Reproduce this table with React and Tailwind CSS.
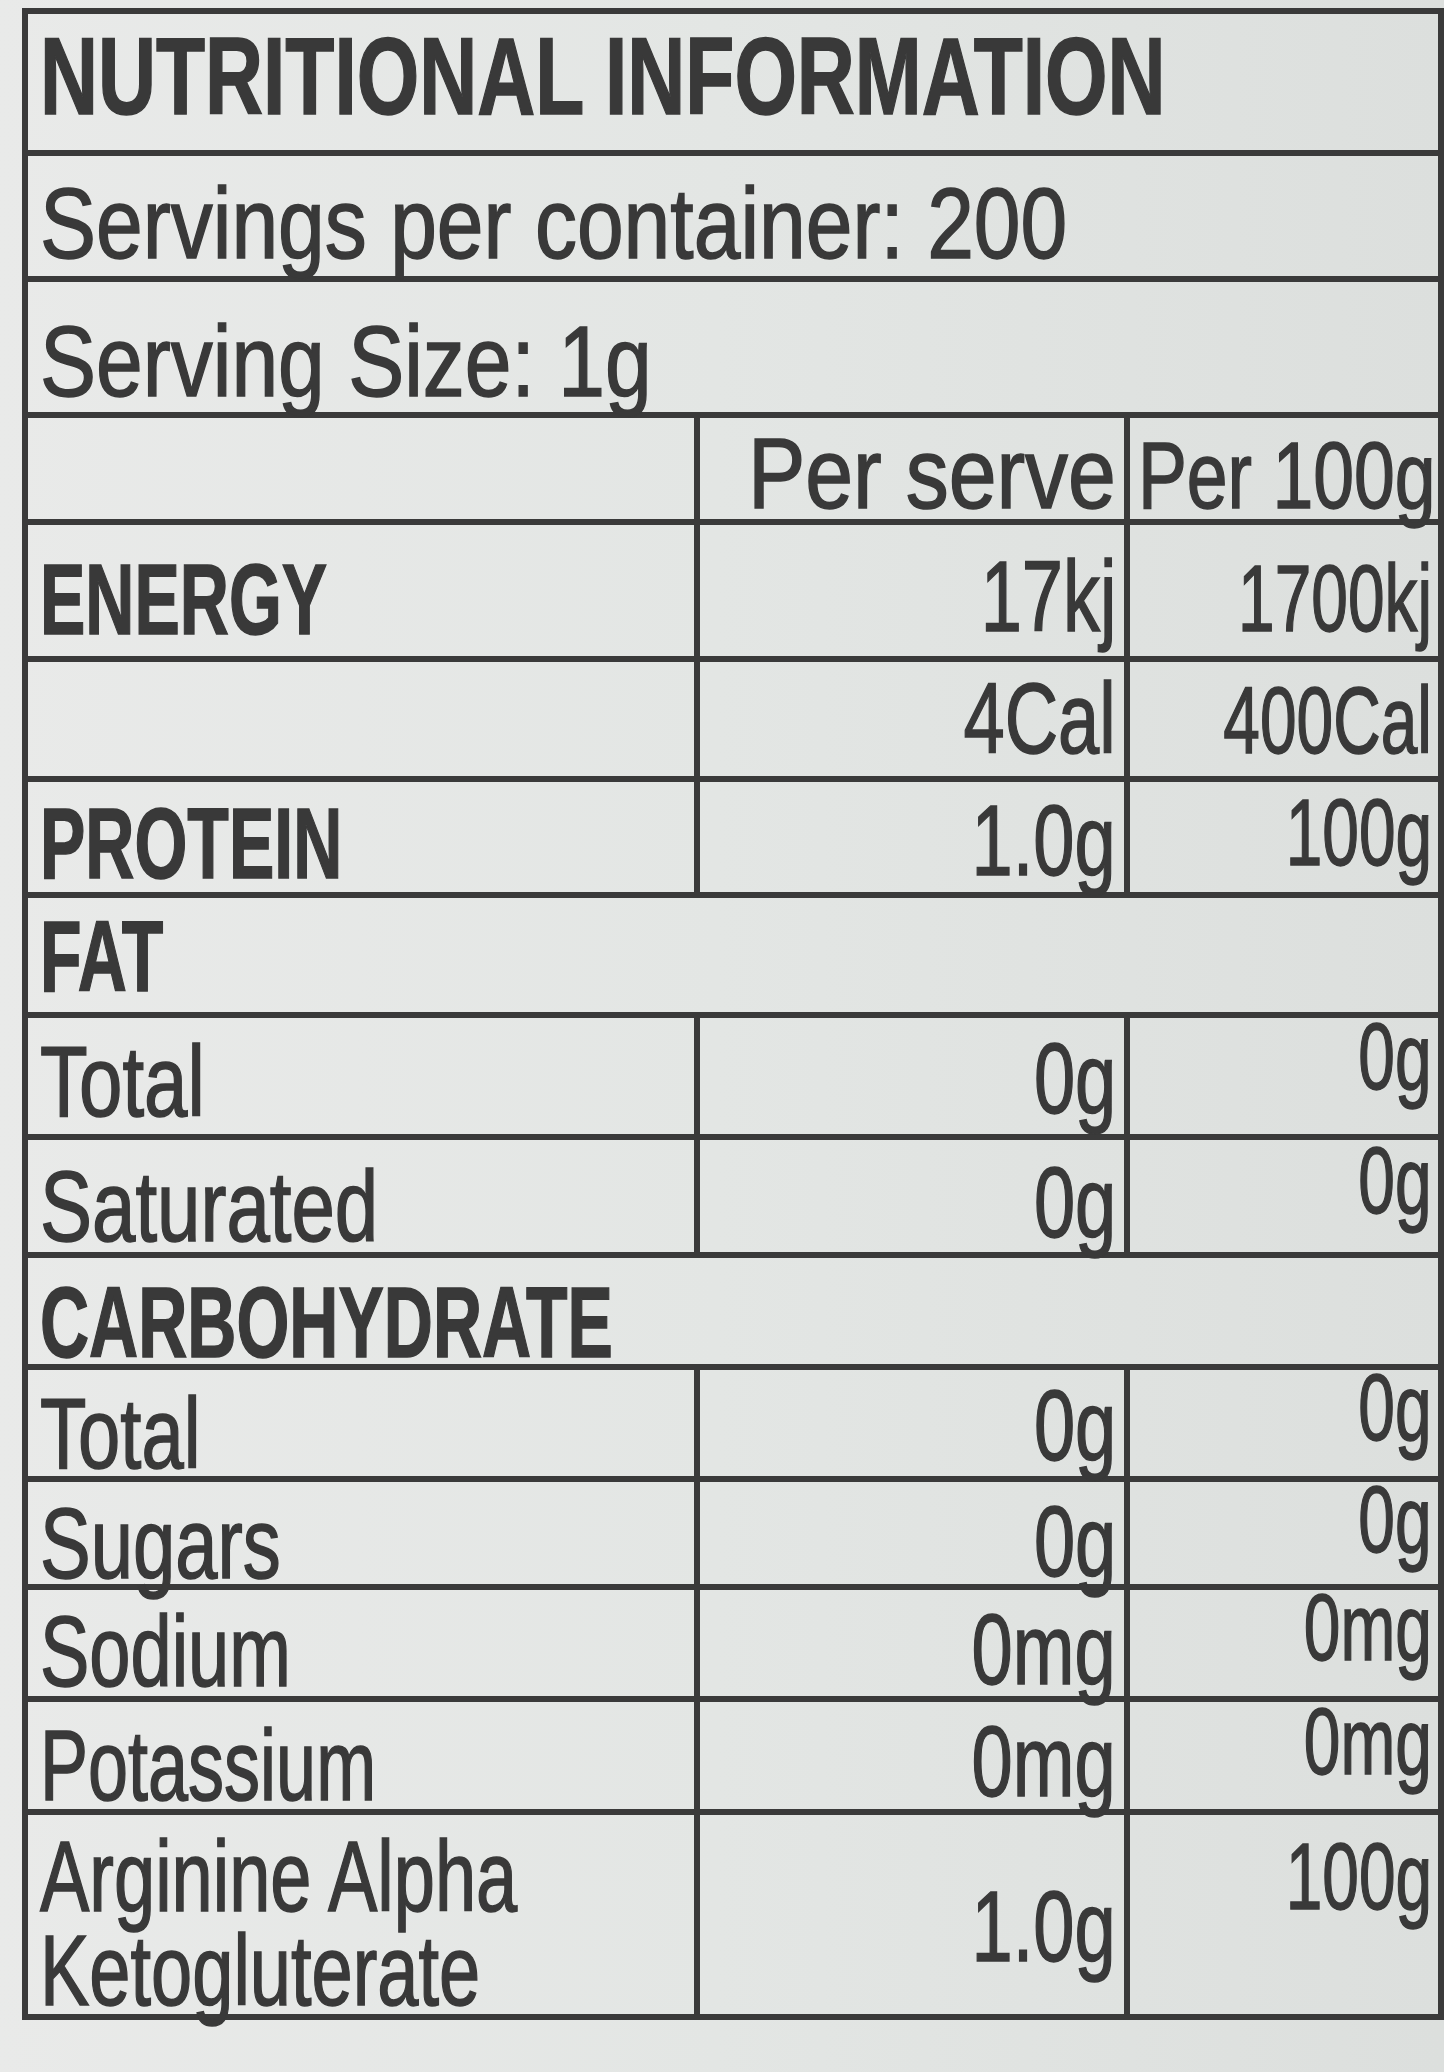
import React from 'react';

const font = { fontFamily: '"Liberation Sans", Arial, sans-serif' };

// condensed text: the label face is a narrow grotesque, so squeeze a regular face
function T({ children, s = 'scale-x-[0.8]', right }) {
  return (
    <span className={`inline-block whitespace-nowrap ${right ? 'origin-right' : 'origin-left'} ${s}`}>
      {children}
    </span>
  );
}

// single full-width row
function WideRow({ h, children, pb }) {
  return (
    <div className={`flex items-end px-[12px] ${pb} ${h} border-b-[6px] border-[#3a3a3a]`}>
      {children}
    </div>
  );
}

// three column row
function Row({ h, label, a, b, pb, pa, pbb, last }) {
  return (
    <div className={`grid grid-cols-[672px_430px_minmax(0,1fr)] ${h} ${last ? '' : 'border-b-[6px]'} border-[#3a3a3a]`}>
      <div className={`flex items-end px-[12px] ${pb} border-r-[6px] border-[#3a3a3a]`}>{label}</div>
      <div className={`flex items-end justify-end pr-[8px] ${pa || pb} border-r-[6px] border-[#3a3a3a]`}>
        <T right s="scale-x-[0.74]">{a}</T>
      </div>
      <div className={`flex items-end justify-end pr-[6px] text-[94px] ${pbb || pa || pb}`}>
        <T right s="scale-x-[0.7]">{b}</T>
      </div>
    </div>
  );
}

const Bold = ({ children }) => (
  <span className="font-bold">
    <T s="scale-x-[0.68]">{children}</T>
  </span>
);

export default function App() {
  return (
    <div
      className="w-[1444px] h-[2072px] overflow-hidden bg-gradient-to-r from-[#e9eae9] via-[#e3e6e4] to-[#dcdfdd] text-[#393939] [-webkit-text-stroke:1.5px_#393939] pt-[8px] pl-[22px]"
      style={font}
    >
      <div className="w-[1422px] border-[6px] border-[#3a3a3a] text-[100px] leading-[0.8]">
        <WideRow h="h-[142px]" pb="pb-[30px]">
          <span className="font-bold text-[110px]">
            <T s="scale-x-[0.73]">NUTRITIONAL INFORMATION</T>
          </span>
        </WideRow>
        <WideRow h="h-[126px]" pb="pb-[13px]">
          <T s="scale-x-[0.84]">Servings per container: 200</T>
        </WideRow>
        <WideRow h="h-[136px]" pb="pb-[11px]">
          <T s="scale-x-[0.84]">Serving Size: 1g</T>
        </WideRow>
        <div className="grid grid-cols-[672px_430px_minmax(0,1fr)] h-[107px] border-b-[6px] border-[#3a3a3a]">
          <div className="border-r-[6px] border-[#3a3a3a]" />
          <div className="flex items-end justify-end pr-[8px] pb-[6px] border-r-[6px] border-[#3a3a3a]">
            <T right s="scale-x-[0.86]">Per serve</T>
          </div>
          <div className="flex items-end justify-end pr-[2px] pb-[6px] text-[94px]">
            <T right s="scale-x-[0.78]">Per 100g</T>
          </div>
        </div>
        <Row h="h-[137px]" label={<Bold>ENERGY</Bold>} a="17kj" b="1700kj" pb="pb-[17px]" pa="pb-[20px]" />
        <Row h="h-[120px]" label="" a="4Cal" b="400Cal" pb="pb-[18px]" />
        <Row h="h-[116px]" label={<Bold>PROTEIN</Bold>} a="1.0g" b="100g" pb="pb-[9px]" pa="pb-[12px]" pbb="pb-[22px]" />
        <WideRow h="h-[120px]" pb="pb-[16px]">
          <Bold>FAT</Bold>
        </WideRow>
        <Row h="h-[122px]" label={<T s="scale-x-[0.78]">Total</T>} a="0g" b="0g" pb="pb-[13px]" pa="pb-[16px]" pbb="pb-[40px]" />
        <Row h="h-[118px]" label={<T s="scale-x-[0.78]">Saturated</T>} a="0g" b="0g" pb="pb-[6px]" pa="pb-[10px]" pbb="pb-[34px]" />
        <WideRow h="h-[112px]" pb="pb-[2px]">
          <Bold>CARBOHYDRATE</Bold>
        </WideRow>
        <Row h="h-[112px]" label={<T s="scale-x-[0.76]">Total</T>} a="0g" b="0g" pb="pb-[12px]" pa="pb-[20px]" pbb="pb-[40px]" />
        <Row h="h-[108px]" label={<T s="scale-x-[0.76]">Sugars</T>} a="0g" b="0g" pb="pb-[14px]" pa="pb-[16px]" pbb="pb-[40px]" />
        <Row h="h-[112px]" label={<T s="scale-x-[0.74]">Sodium</T>} a="0mg" b="0mg" pb="pb-[8px]" pa="pb-[10px]" pbb="pb-[34px]" />
        <Row h="h-[113px]" label={<T s="scale-x-[0.72]">Potassium</T>} a="0mg" b="0mg" pb="pb-[4px]" pa="pb-[8px]" pbb="pb-[30px]" />
        <Row
          h="h-[199px]"
          label={
            <span className="flex flex-col gap-[14px]">
              <T s="scale-x-[0.74]">Arginine Alpha</T>
              <T s="scale-x-[0.74]">Ketogluterate</T>
            </span>
          }
          a="1.0g"
          b="100g"
          pb="pb-[4px]"
          pa="pb-[48px]"
          pbb="pb-[100px]"
          last
        />
      </div>
    </div>
  );
}
